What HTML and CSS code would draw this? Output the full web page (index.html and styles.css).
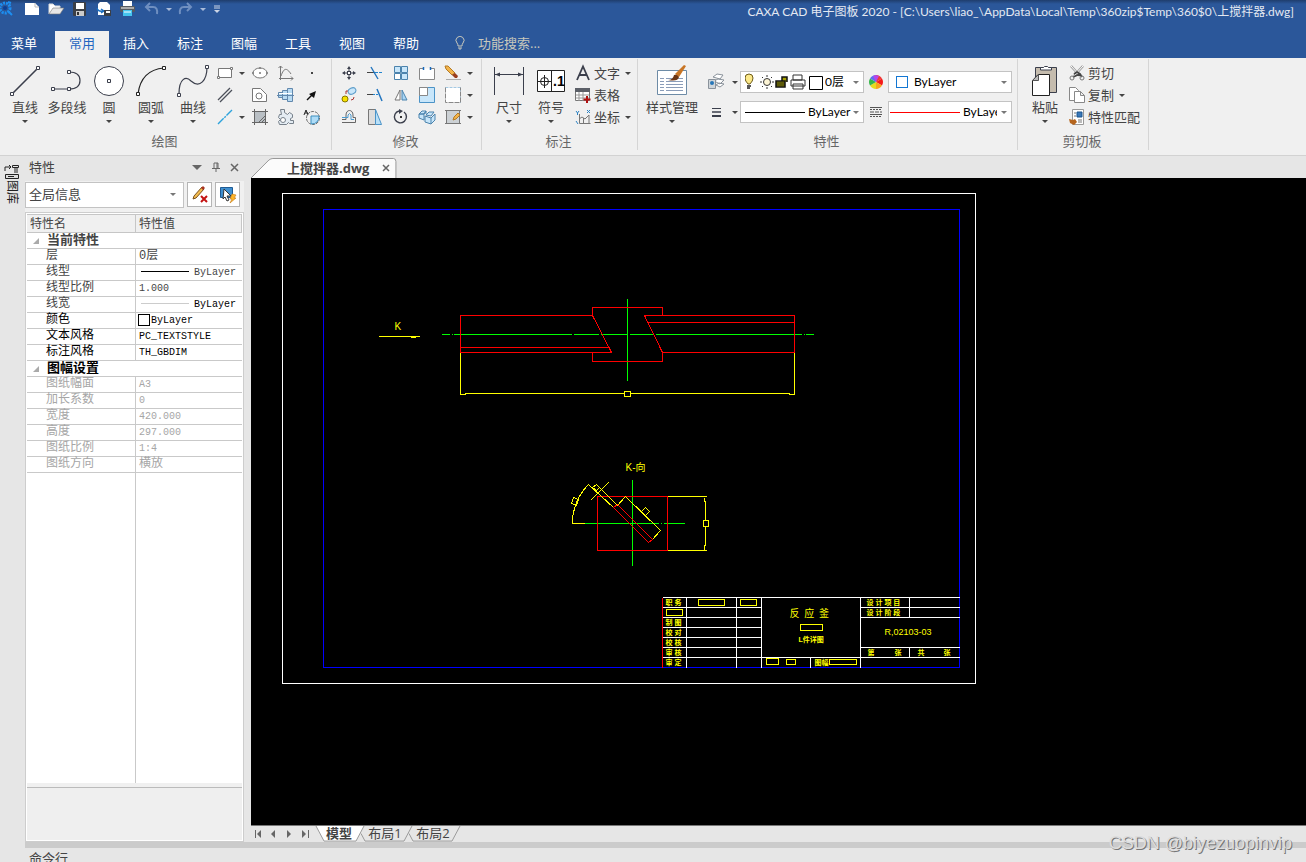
FILE: index.html
```
<!DOCTYPE html>
<html lang="zh-CN">
<head>
    <meta charset="UTF-8">
    <meta name="viewport" content="width=device-width, initial-scale=1.0">
    <title>CAXA CAD 电子图板 2020</title>
    <link rel="stylesheet" href="styles.css">
</head>
<body>
    <header class="titlebar">
        <div class="quick-access">
            <svg class="logo" width="14" height="18" viewBox="0 0 14 18"><circle cx="5" cy="8" r="5" fill="none" stroke="#1d8ef0" stroke-width="3" stroke-dasharray="2 1"/><circle cx="5" cy="8" r="2" fill="#0b3f96"/><path d="M8 11l4 4M8 2l3 1" stroke="#1d8ef0" stroke-width="2"/></svg>
            <button class="qa-btn" aria-label="新建"><svg width="18" height="18" viewBox="0 0 18 18"><path d="M2 3h10l4 4v8H2z" fill="#fff"/><path d="M12 3v4h4" fill="none" stroke="#bbb"/></svg></button>
            <button class="qa-btn" aria-label="打开"><svg width="18" height="18" viewBox="0 0 18 18"><path d="M2 14V4h4l2 2h5v2" fill="#fff" stroke="#ddd"/><path d="M2 14l4-6h11l-4 6z" fill="#e6e6e6" stroke="#777" stroke-width=".6"/></svg></button>
            <button class="qa-btn" aria-label="保存"><svg width="18" height="18" viewBox="0 0 18 18"><rect x="2" y="2" width="13" height="14" rx="1" fill="#3b3f46"/><rect x="5" y="3" width="8" height="6" fill="#fff"/><rect x="5" y="11" width="8" height="5" fill="#ccc"/><rect x="6" y="12" width="2" height="3" fill="#333"/></svg></button>
            <button class="qa-btn" aria-label="另存为"><svg width="18" height="18" viewBox="0 0 18 18"><path d="M5 2h7l3 3v10H3V4z" fill="#fff"/><path d="M2 8q1 4 6 3M6 9l3 2-3 2" fill="none" stroke="#1d6fc0" stroke-width="1.4"/><rect x="9" y="10" width="7" height="6" fill="#3b3f46"/><rect x="11" y="11" width="4" height="2" fill="#fff"/></svg></button>
            <button class="qa-btn" aria-label="打印"><svg width="18" height="18" viewBox="0 0 18 18"><rect x="4" y="1" width="9" height="5" fill="#fff"/><rect x="1" y="6" width="15" height="6" rx="1" fill="#555a60"/><rect x="2" y="7" width="13" height="2" fill="#aaa"/><path d="M4 10h9v6H4z" fill="#45c5ee"/><path d="M5 12h7" stroke="#fff"/></svg></button>
            <button class="qa-btn" aria-label="撤销"><svg width="18" height="18" viewBox="0 0 18 18" fill="none" stroke="#6f8fc0" stroke-width="2"><path d="M7 3L3 7l4 4M3 7h7q5 0 4 7"/></svg></button>
            <span class="arrow arrow-light"></span>
            <button class="qa-btn" aria-label="重做"><svg width="18" height="18" viewBox="0 0 18 18" fill="none" stroke="#6f8fc0" stroke-width="2"><path d="M10 3l4 4-4 4M14 7H7q-5 0-4 7"/></svg></button>
            <span class="arrow arrow-light"></span>
            <button class="qa-more" aria-label="自定义"><svg width="8" height="10" viewBox="0 0 8 10"><path d="M1 2h6M1 4h6" stroke="#ccd5e5"/><path d="M1 6h6L4 9z" fill="#ccd5e5"/></svg></button>
        </div>
        <div class="window-title">CAXA CAD 电子图板 2020 - [C:\Users\liao_\AppData\Local\Temp\360zip$Temp\360$0\上搅拌器.dwg]</div>
    </header>

    <nav class="menu-tabs">
        <button class="menu-tab menu-main">菜单</button>
        <button class="menu-tab active">常用</button>
        <button class="menu-tab">插入</button>
        <button class="menu-tab">标注</button>
        <button class="menu-tab">图幅</button>
        <button class="menu-tab">工具</button>
        <button class="menu-tab">视图</button>
        <button class="menu-tab">帮助</button>
        <label class="search">
            <svg width="12" height="14" viewBox="0 0 12 14" fill="none" stroke="#c8c8bc"><path d="M4 10Q4 8 3 7a4 4 0 1 1 6 0q-1 1-1 3zM4 12h4M5 13h2"/></svg>
            <input type="text" placeholder="功能搜索..." aria-label="功能搜索">
        </label>
    </nav>

    <section class="ribbon">
        <div class="group group-draw">
            <div class="group-body">
                <button class="big-btn"><svg width="34" height="34" viewBox="0 0 34 34" stroke="#3b3f4c" fill="#fff"><path d="M4 30L30 4" stroke-width="1.6"/><path d="M2.500 28.500h3v3h-3zM28.500 2.500h3v3h-3z"/></svg><span>直线</span><i class="arrow"></i></button>
                <button class="big-btn"><svg width="34" height="34" viewBox="0 0 34 34" stroke="#3b3f4c" fill="#fff"><path d="M3 25h16q11 0 11-8.500T19 8" fill="none" stroke-width="1.200"/><path d="M1.500 23.500h3v3h-3zM17.500 23.500h3v3h-3zM17.500 6.500h3v3h-3z"/></svg><span>多段线</span></button>
                <button class="big-btn"><svg width="34" height="34" viewBox="0 0 34 34" stroke="#3b3f4c" fill="#fff"><circle cx="17" cy="17" r="14.500"/><path d="M15.500 15.500h3v3h-3z"/></svg><span>圆</span><i class="arrow"></i></button>
                <button class="big-btn"><svg width="34" height="34" viewBox="0 0 34 34" stroke="#222" fill="#fff"><path d="M4 30Q7 6 30 4" fill="none" stroke-width="1.200"/><path d="M2.500 28.500h3v3h-3zM28.500 2.500h3v3h-3z"/></svg><span>圆弧</span><i class="arrow"></i></button>
                <button class="big-btn"><svg width="34" height="34" viewBox="0 0 34 34" stroke="#3b3f4c" fill="#fff"><path d="M3 30C3 14 10 12 15 17c9 8 16-1 16-14" fill="none" stroke-width="1.200"/><path d="M1.500 29.500h3v3h-3zM29.500 1.500h3v3h-3z"/></svg><span>曲线</span><i class="arrow"></i></button>
                <div class="icon-grid draw-grid">
                    <button class="tool" aria-label="矩形"><svg width="18" height="18" viewBox="0 0 18 18" fill="#fff" stroke="#777"><path d="M2.500 4.500h13v9h-13z"/><path d="M1.500 12.500h2v2h-2zM14.500 3.500h2v2h-2z"/></svg></button>
                    <i class="arrow"></i>
                    <button class="tool" aria-label="椭圆"><svg width="18" height="18" viewBox="0 0 18 18" fill="#fff" stroke="#777"><ellipse cx="9" cy="9" rx="7" ry="5"/><path d="M1.500 8.500h1v1h-1zM15.500 8.500h1v1h-1zM8.500 3.500h1v1h-1zM9 8v2M8 9h2"/></svg></button>
                    <button class="tool" aria-label="公式曲线"><svg width="18" height="18" viewBox="0 0 18 18" fill="none" stroke="#777"><path d="M3.500 2v14M2 14.500h14M1.500 4l2-2 2 2M4 12c3-9 6-8 10-2M14 12.500l2 2-2 2"/></svg></button>
                    <button class="tool" aria-label="点"><svg width="18" height="18" viewBox="0 0 18 18"><rect x="8" y="8" width="2" height="2" fill="#444"/></svg></button>
                    <button class="tool" aria-label="平行线"><svg width="18" height="18" viewBox="0 0 18 18" stroke="#4c505a" stroke-width="1.300"><path d="M2 14L14 2M4 16L16 4"/></svg></button>
                    <span></span>
                    <button class="tool" aria-label="局部放大"><svg width="18" height="18" viewBox="0 0 18 18" fill="#fff" stroke="#777"><path d="M1.500 2.500h8l6 6v7h-14z"/><circle cx="8" cy="10" r="3"/></svg></button>
                    <button class="tool" aria-label="轴"><svg width="18" height="18" viewBox="0 0 18 18" fill="#b8dbf3" stroke="#6288ad"><path d="M1.500 6.500h4v5h-4zM5.500 4.500h5v9h-5zM10.500 2.500h5v13h-5z"/><path d="M2 7.500h13" stroke="#fff"/><path d="M0 9.500h17"/></svg></button>
                    <button class="tool" aria-label="箭头"><svg width="18" height="18" viewBox="0 0 18 18"><path d="M4 14l5-5" stroke="#111" stroke-width="1.500"/><path d="M13 5l-2 7-5-4z" fill="#111"/></svg></button>
                    <button class="tool" aria-label="中心线"><svg width="18" height="18" viewBox="0 0 18 18"><path d="M2 16L16 2" stroke="#2ea3dc" stroke-width="1.400" stroke-dasharray="8 1 2 1"/></svg></button>
                    <i class="arrow"></i>
                    <button class="tool" aria-label="剖面线"><svg width="18" height="18" viewBox="0 0 18 18" stroke="#666" fill="#b9bfc4"><path d="M3.500 3.500h11v11h-11zM1 3.500h16M1 14.500h16M3.500 1v16M14.500 1v16M8 14l6-6M11 14l3-3"/></svg></button>
                    <button class="tool" aria-label="齿轮"><svg width="18" height="18" viewBox="0 0 18 18" fill="#e4ecf3" stroke="#77818b"><path d="M3.500 1.500h4v3l3 2 2-2 3 2v3l-2 1v2h3v3h-4l-1-1-2 2h-7l-1-3 2-2-2-2 1-3h2z"/><circle cx="6" cy="12" r="2.500" fill="#fff"/></svg></button>
                    <button class="tool" aria-label="文字圆"><svg width="18" height="18" viewBox="0 0 18 18" fill="none" stroke="#666"><circle cx="10" cy="10" r="6.500" stroke-dasharray="3 1"/><path d="M8 8h8q0 8-8 8z" fill="#aedcf7" stroke="#3c8fc0"/><path d="M1 7l2-5 2 5M2 5h3" stroke="#222"/></svg></button>
                </div>
            </div>
            <div class="group-name">绘图</div>
        </div>

        <div class="group group-modify">
            <div class="group-body">
                <div class="icon-grid modify-grid">
                    <button class="tool" aria-label="平移"><svg width="18" height="18" viewBox="0 0 18 18" fill="#3b3f4c"><path d="M9 2l2 3H7zM9 16l2-3H7zM2 9l3-2v4zM16 9l-3-2v4z"/><path d="M9 4v10M4 9h10" stroke="#3b3f4c"/><rect x="7.500" y="7.500" width="3" height="3" fill="#fff" stroke="#3b3f4c"/></svg></button>
                    <button class="tool" aria-label="裁剪"><svg width="18" height="18" viewBox="0 0 18 18" fill="none"><path d="M1 8.500h8" stroke="#444"/><path d="M9 8.500h8" stroke="#2385cf" stroke-dasharray="3 1"/><path d="M5 3l7 12" stroke="#2174be" stroke-width="1.400"/></svg></button>
                    <button class="tool" aria-label="阵列"><svg width="18" height="18" viewBox="0 0 18 18" fill="#c8e6fa" stroke="#4b83ad"><path d="M2.500 2.500h6v6h-6zM9.500 2.500h6v6h-6zM9.500 9.500h6v6h-6z"/><path d="M2.500 9.500h6v6h-6z" fill="#fff"/></svg></button>
                    <button class="tool" aria-label="打断"><svg width="18" height="18" viewBox="0 0 18 18" fill="#fff" stroke="#888"><path d="M6 4.500H1.500v11h15v-11H12"/><path d="M5.500 3v3M12.500 3v3" stroke="#1769bd" stroke-width="1.500"/></svg></button>
                    <button class="tool" aria-label="删除"><svg width="18" height="18" viewBox="0 0 18 18"><path d="M1 2h3l7 7-3 2-6-6z" fill="#f2b44b" stroke="#b47a24"/><path d="M8 11l3-2 3 3-1 2h-2z" fill="#9a3d1d"/><path d="M2 15.500h15" stroke="#aaa"/></svg></button>
                    <i class="arrow"></i>
                    <button class="tool" aria-label="复制"><svg width="18" height="18" viewBox="0 0 18 18" fill="none"><ellipse cx="12" cy="5" rx="4" ry="3" fill="#c8e6fa" stroke="#5b9cc9" transform="rotate(-25 12 5)"/><circle cx="5" cy="13" r="3" fill="#f7e000" stroke="#857700"/><path d="M6 8V5l2 0M11 14q3 0 3-3" stroke="#a33"/></svg></button>
                    <button class="tool" aria-label="延伸"><svg width="18" height="18" viewBox="0 0 18 18"><path d="M1 8.500h6" stroke="#444"/><path d="M7 8.500h6" stroke="#2385cf" stroke-dasharray="2 1"/><path d="M11 3l5 12" stroke="#2174be" stroke-width="1.500"/></svg></button>
                    <button class="tool" aria-label="镜像"><svg width="18" height="18" viewBox="0 0 18 18"><path d="M8 4v10H3z" fill="#fff" stroke="#777"/><path d="M10 4v10h5z" fill="#a8d5f5" stroke="#4b83ad"/></svg></button>
                    <button class="tool" aria-label="缩放"><svg width="18" height="18" viewBox="0 0 18 18" stroke="#4b93c7"><path d="M1.500 1.500h15v15h-15z" fill="#c8e6fa"/><path d="M1.500 1.500h8v8h-8z" fill="#fff" stroke="#888"/></svg></button>
                    <button class="tool" aria-label="拉伸"><svg width="18" height="18" viewBox="0 0 18 18" fill="#fff"><path d="M1.500 1.500h15v15" stroke="#4b93c7" stroke-dasharray="3 1"/><path d="M1.500 1.500v15h15v-15" stroke="#888" stroke-dasharray="5 1"/></svg></button>
                    <i class="arrow"></i>
                    <button class="tool" aria-label="等距线"><svg width="18" height="18" viewBox="0 0 18 18" fill="none"><path d="M2 11.500h4V7c0-6 7-6 7 0v2.500h2.500v5H2" stroke="#666"/><path d="M2 9.500h6V7q1.500-3 3 0v4.500h3" stroke="#4b9bd0"/></svg></button>
                    <button class="tool" aria-label="拉伸实体"><svg width="18" height="18" viewBox="0 0 18 18"><path d="M2.500 1.500h7v15h-7z" fill="#ddd" stroke="#777"/><path d="M9.500 1.500l6 15h-6z" fill="#b9e0f8" stroke="#4b93c7"/></svg></button>
                    <button class="tool" aria-label="旋转"><svg width="18" height="18" viewBox="0 0 18 18"><path d="M12 4A6 6 0 1 1 7 3" fill="none" stroke="#3b3f4c" stroke-width="1.400"/><path d="M7 1l4 2-4 3z" fill="#3b3f4c"/><rect x="8" y="8" width="2" height="2" fill="#333"/></svg></button>
                    <button class="tool" aria-label="分解"><svg width="18" height="18" viewBox="0 0 18 18" fill="#c8e6fa" stroke="#4b83ad"><path d="M1 6l3-3h4L6 6zM1 6h5v6l-5-2zM6 6l2-3v3M8 7l3-3h5l-3 4zM7 8l6 2v6l-6-2zM13 10l4-4v6l-4 4"/></svg></button>
                    <button class="tool" aria-label="填充编辑"><svg width="18" height="18" viewBox="0 0 18 18" stroke="#777" fill="#ccd1d5"><path d="M2.500 2.500h13v13h-13zM1 2.500h16M1 15.500h16"/><path d="M9 12l1-3 4-4 2 2-4 4z" fill="#f2b44b" stroke="#b47a24"/></svg></button>
                    <i class="arrow"></i>
                </div>
            </div>
            <div class="group-name">修改</div>
        </div>

        <div class="group group-note">
            <div class="group-body">
                <button class="big-btn"><svg width="34" height="34" viewBox="0 0 34 34"><path d="M2.500 3v28M31.500 3v28M3 10.500h28" stroke="#3b3f4c"/><path d="M3 10.500l5-2v4zM31 10.500l-5-2v4z" fill="#3b3f4c"/></svg><span>尺寸</span><i class="arrow"></i></button>
                <button class="big-btn"><svg width="34" height="34" viewBox="0 0 34 34"><path d="M3.500 6.500h27v21h-27zM17.500 6.500v21" fill="#fff" stroke="#222"/><circle cx="10.500" cy="17.500" r="4" fill="none" stroke="#222"/><path d="M4 17.500h13M10.500 11v13" stroke="#222"/><text class="tolerance" x="19" y="22">.1</text></svg><span>符号</span><i class="arrow"></i></button>
                <div class="row-list">
                    <button class="row-btn"><svg width="18" height="18" viewBox="0 0 18 18"><path d="M3 16L9 2.500 15 16M5 11h8" fill="none" stroke="#3b3f4c" stroke-width="1.800"/></svg>文字<i class="arrow"></i></button>
                    <button class="row-btn"><svg width="18" height="18" viewBox="0 0 18 18"><path d="M1.500 2.500h14v12h-14z" fill="#fff" stroke="#777"/><path d="M1 2h15v4H1z" fill="#5c6068"/><path d="M2 9h13M2 12h13M5 6v9M9 6v9" stroke="#999"/><path d="M13 10v7M9.500 13.500h7" stroke="#b01010" stroke-width="2"/></svg>表格</button>
                    <button class="row-btn"><svg width="18" height="18" viewBox="0 0 18 18" fill="none"><path d="M5.500 6v9.500h11M5 11l3-2 3 2 4-4v8M9.500 10v5" stroke="#777"/><path d="M2 3l1.500 2L5 3M3.500 5v2M13 2l3 3M16 2l-3 3M2 13l2 3" stroke="#2d83c4"/></svg>坐标<i class="arrow"></i></button>
                </div>
            </div>
            <div class="group-name">标注</div>
        </div>

        <div class="group group-props">
            <div class="group-body">
                <button class="big-btn style-btn"><svg width="34" height="34" viewBox="0 0 34 34"><path d="M2.500 6.500h29v24h-29z" fill="#fff" stroke="#6d8ba6"/><path d="M5 14.500h4M5 17.500h4M5 20.500h4M5 23.500h4M5 26.500h4M11 14.500h17M11 17.500h17M11 20.500h17M11 23.500h17M11 26.500h17" stroke="#8a9cb8"/><path d="M20 10L29 1l2 1-7 11z" fill="#c87524"/><path d="M13 16q5 0 6-5 3-1 5 2-1 5-11 3z" fill="#6b3513"/></svg><span>样式管理</span><i class="arrow"></i></button>
                <div class="combo-grid">
                    <button class="tool" aria-label="图层"><svg width="18" height="18" viewBox="0 0 18 18" fill="#fff" stroke="#8a929b"><path d="M6 4l4-3 6 1-3 4zM7 8l4-2 6 1-4 4zM9 12l3-2 5 1-4 3z"/><path d="M1.500 6.500h7v9h-7z" fill="#cfd5da"/><circle cx="5" cy="10" r="2" fill="#2776b8" stroke="none"/></svg></button>
                    <i class="arrow"></i>
                    <label class="combo">
                        <svg width="80" height="18" viewBox="0 0 80 18"><path d="M3 11q-3-3-3-6 0-4 4-4t4 4q0 3-3 6z" fill="#fce98a" stroke="#6d5b18"/><path d="M2 13h4M2 15h3" stroke="#222" stroke-width="1.500"/><g stroke="#333"><circle cx="22" cy="9" r="3.500" fill="#fdf5d5"/><path d="M22 2v2M22 14v2M15 9h2M27 9h2M17 4l1 1M26 13l1 1M27 4l-1 1M18 13l-1 1"/></g><path d="M31 8h9v6h-9zM37 8V4h5v5" fill="#a9a300" stroke="#111" stroke-width="1.500"/><path d="M31 10h9M31 12h9" stroke="#111"/><path d="M48 2h9v5h-9zM46 7h14v6H46zM48 11h10v5H48z" fill="#fff" stroke="#333"/><path d="M64.500 3.500h13v13h-13z" fill="#fff" stroke="#000"/></svg>
                        <select aria-label="图层选择"><option>0层</option></select>
                        <i class="arrow arrow-grey"></i>
                    </label>
                    <button class="tool" aria-label="颜色"><svg width="16" height="16" viewBox="0 0 16 16"><path d="M8 8V1a7 7 0 0 1 6 3.500z" fill="#f03838"/><path d="M8 8l6-3.500a7 7 0 0 1 0 7z" fill="#f51a1a"/><path d="M8 8l6 3.500A7 7 0 0 1 8 15z" fill="#f7a51b"/><path d="M8 8v7a7 7 0 0 1-6-3.500z" fill="#e5dc20"/><path d="M8 8l-6 3.500a7 7 0 0 1 0-7z" fill="#35b64a"/><path d="M8 8L2 4.500A7 7 0 0 1 8 1z" fill="#5c6ff0"/><path d="M8 8L5 2a7 7 0 0 1 6 0z" fill="#b744e8"/></svg></button>
                    <label class="combo">
                        <span class="color-box"></span>
                        <select aria-label="颜色选择"><option>ByLayer</option></select>
                        <i class="arrow arrow-grey"></i>
                    </label>

                    <button class="tool" aria-label="线宽"><svg width="18" height="18" viewBox="0 0 18 18" stroke="#3b3f4c"><path d="M5 5.500h9"/><path d="M5 9h9" stroke-width="1.500"/><path d="M5 13h9" stroke-width="2"/></svg></button>
                    <i class="arrow"></i>
                    <label class="combo">
                        <span class="line-sample line-black"></span>
                        <select aria-label="线宽选择"><option>ByLayer</option></select>
                        <i class="arrow arrow-grey"></i>
                    </label>
                    <button class="tool" aria-label="线型"><svg width="14" height="18" viewBox="0 0 14 18" stroke="#555"><path d="M1 4.500h12M1 11.500h12"/><path d="M1 6.500h12M1 13.500h12" stroke-dasharray="2 1"/><path d="M1 9h12" stroke-dasharray="4 1"/></svg></button>
                    <label class="combo combo-linetype">
                        <span class="line-sample line-red"></span>
                        <select aria-label="线型选择"><option>ByLayer</option></select>
                        <i class="arrow arrow-grey"></i>
                    </label>
                </div>
            </div>
            <div class="group-name">特性</div>
        </div>

        <div class="group group-clip">
            <div class="group-body">
                <button class="big-btn"><svg width="34" height="34" viewBox="0 0 34 34"><path d="M7.500 3.500h21v25h-21z" fill="#c5bcae" stroke="#3b3f4c"/><path d="M12.500 6V3.500h3l1-1h3l1 1h3V6z" fill="#fff" stroke="#3b3f4c"/><path d="M10 10.500h11.500v21h-17v-15z" fill="#fff" stroke="#222"/><path d="M4.500 16.500h6v-6z" fill="#bbb" stroke="#555"/></svg><span>粘贴</span><i class="arrow"></i></button>
                <div class="row-list">
                    <button class="row-btn"><svg width="18" height="18" viewBox="0 0 18 18" fill="none"><path d="M3 2l9 10M15 2L6 12" stroke="#999" stroke-width="2.500"/><path d="M3 2l9 10M15 2L6 12" stroke="#fff"/><path d="M6 10l3-2 3 2 2 3M12 10l-7 3" stroke="#444" stroke-width="1.800"/><circle cx="4" cy="14" r="2" stroke="#777"/><circle cx="14" cy="14" r="2" stroke="#777"/></svg>剪切</button>
                    <button class="row-btn"><svg width="18" height="18" viewBox="0 0 18 18" fill="#fff" stroke="#888"><path d="M1.500 1.500h6l3 3v10h-9z"/><path d="M6.500 5.500h6l4 4v7h-10zM12.500 5.500v4h4"/></svg>复制<i class="arrow"></i></button>
                    <button class="row-btn"><svg width="18" height="18" viewBox="0 0 18 18"><path d="M4.500 1.500h11v15h-11z" fill="#fff" stroke="#999"/><path d="M9 4h5v5H9z" fill="#3978ba" stroke="#1c548c"/><path d="M6 5h2M6 8h2M10 12h4M10 14h4" stroke="#777"/><path d="M1 11l4 1 2-1 2 3-3 3-4-2z" fill="#b5651d"/></svg>特性匹配</button>
                </div>
            </div>
            <div class="group-name">剪切板</div>
        </div>
    </section>

    <main class="workspace">
        <aside class="side-strip">
            <button class="side-tab"><svg width="16" height="16" viewBox="0 0 16 16" fill="none" stroke="#222"><path d="M1 8V4h6M5 2l2 2-2 2M8.500 2.500h6v2h-6zM11 5v5M13 5v5"/><path d="M1.500 11.500h13v4h-13z" fill="#ddd"/><path d="M4 13.500h6"/></svg><span>图库</span></button>
        </aside>

        <section class="panel">
            <div class="panel-head">
                <h2>特性</h2>
                <button class="panel-ctl" aria-label="菜单"><svg width="10" height="10" viewBox="0 0 10 10"><path d="M0 3h10L5 8z" fill="#666"/></svg></button>
                <button class="panel-ctl" aria-label="固定"><svg width="10" height="10" viewBox="0 0 10 10" fill="none" stroke="#666"><path d="M3 6V1h4v5M6 1v5M1 6.500h8M5 7v3"/></svg></button>
                <button class="panel-ctl" aria-label="关闭"><svg width="10" height="10" viewBox="0 0 10 10"><path d="M1 2l7 7M8 2L1 9" stroke="#666" stroke-width="1.500"/></svg></button>
            </div>
            <div class="panel-filter">
                <label class="combo filter-combo">
                    <select aria-label="选择范围"><option>全局信息</option></select>
                    <i class="arrow arrow-grey"></i>
                </label>
                <button class="filter-btn" aria-label="清除选择"><svg width="18" height="18" viewBox="0 0 18 18"><path d="M2 13l1-3 8-9 2 2-8 9z" fill="#f4bd50" stroke="#79501c"/><path d="M10 2l2-2 2 2-2 2z" fill="#a83220"/><path d="M10 10l6 6M16 10l-6 6" stroke="#c41212" stroke-width="2"/></svg></button>
                <button class="filter-btn" aria-label="快速选择"><svg width="18" height="18" viewBox="0 0 18 18"><path d="M1.500 1.500h12v10h-12z" fill="#3f8fd0" stroke="#1f5b94"/><path d="M5 3l7 7h-4l2 4-2 1-2-4-2 2z" fill="#fff" stroke="#333"/><path d="M13 8l4 1-2 3h2l-6 5 2-4h-2z" fill="#ffb628" stroke="#c47912" stroke-width=".6"/></svg></button>
            </div>
            <div class="prop-box">
                <table class="props">
                    <colgroup><col class="col-name"><col></colgroup>
                    <thead>
                        <tr><th>特性名</th><th>特性值</th></tr>
                    </thead>
                    <tbody>
                        <tr class="section"><td colspan="2"><svg width="6" height="6" viewBox="0 0 6 6"><path d="M6 0v6H0z" fill="#aaa"/></svg>当前特性</td></tr>
                        <tr><td>层</td><td class="cjk">0层</td></tr>
                        <tr><td>线型</td><td><span class="cell-line"></span>ByLayer</td></tr>
                        <tr><td>线型比例</td><td>1.000</td></tr>
                        <tr><td>线宽</td><td class="dark"><span class="cell-line thin"></span>ByLayer</td></tr>
                        <tr class="dark"><td>颜色</td><td class="color-cell"><span class="cell-color"></span>ByLayer</td></tr>
                        <tr class="dark"><td>文本风格</td><td>PC_TEXTSTYLE</td></tr>
                        <tr class="dark"><td>标注风格</td><td>TH_GBDIM</td></tr>
                        <tr class="section dark"><td colspan="2"><svg width="6" height="6" viewBox="0 0 6 6"><path d="M6 0v6H0z" fill="#aaa"/></svg>图幅设置</td></tr>
                        <tr class="off"><td>图纸幅面</td><td>A3</td></tr>
                        <tr class="off"><td>加长系数</td><td>0</td></tr>
                        <tr class="off"><td>宽度</td><td>420.000</td></tr>
                        <tr class="off"><td>高度</td><td>297.000</td></tr>
                        <tr class="off"><td>图纸比例</td><td>1:4</td></tr>
                        <tr class="off"><td>图纸方向</td><td class="cjk">横放</td></tr>
                    </tbody>
                </table>
                <div class="prop-rest"></div>
                <div class="prop-desc"></div>
            </div>
        </section>

        <section class="document">
            <div class="doc-tabs">
                <div class="doc-tab">
                    <svg class="tab-shape" viewBox="0 0 146 20" preserveAspectRatio="none"><path d="M0 20L18 2q2-1.500 4-1.500h121q2.500 0 2.500 3V20" fill="#fbfbfb" stroke="#999"/></svg>
                    <span>上搅拌器.dwg</span>
                    <button class="doc-close" aria-label="关闭"><svg width="8" height="8" viewBox="0 0 8 8"><path d="M1 1l6 6M7 1L1 7" stroke="#666" stroke-width="1.500"/></svg></button>
                </div>
            </div>

            <div class="canvas">
                <svg class="drawing" width="100%" height="100%">
                    <g transform="translate(-250.500 -177.500)" fill="none" shape-rendering="crispEdges">
                        <!-- sheet frame -->
                        <path class="white" d="M282 193h693v490H282z"/>
                        <path class="frame" d="M323 209h636v458H323z"/>

                        <!-- front view -->
                        <path class="green" d="M441 334h8M451 334h1M453 334h118M573 334h25M600 334h1M602 334h24M629 334h24M655 334h146M803 334h1M805 334h8M627 298v82"/>
                        <path class="red" d="M592 315H460v37h151L592 315v-8h70v8M609 347H460M643 315h151v37H662L644 315M647 322h147M592 352v9h70v-9"/>
                        <path class="yellow" d="M460 352v42h5v-1h324v1h5v-42"/>
                        <path class="yellow on-black" d="M624 391h6v5h-6z"/>
                        <path class="yellow" d="M378 336h41M410 337h5"/>
                        <text class="cad-text label" x="394" y="329">K</text>

                        <!-- K direction view -->
                        <path class="green" d="M632 479v86M584 523h74M660 523h1M663 523h21"/>
                        <path class="red" d="M597 496h70v54h-70zM613 507l35 35 4-3-35-35z"/>
                        <path class="yellow" d="M584 523h-12q0-23 16-39M588 484l25 23M600 488l17 17 8-9 35 34-8 9M590 500l18-18"/>
                        <path class="yellow" d="M573 497l5 2-2 6-5-2zM592 487l4-3 3 3-3 3zM641 511l4-4 4 4-4 4z"/>
                        <path class="yellow" d="M667 496h39M667 550h39M704 497v4h1v44h-1v5"/>
                        <path class="yellow on-black" d="M703 520h5v6h-5z"/>
                        <text class="cad-text label" x="625" y="470">K-向</text>

                        <!-- title block -->
                        <path class="white" d="M662 597h297M662 607h99M860 607h99M662 617h99M860 617h99M662 627h99M662 637h99M662 647h99M860 647h99M662 657h297M686 597v70M736 597v70M761 597v70M860 597v70M909 597v20M909 647v10M810 657v10"/>
                        <path class="red" d="M662 597v70"/>
                        <path class="yellow" d="M698 599h26v6h-26zM740 599h16v6h-16zM666 609h16v6h-16zM800 624h22v6h-22zM766 658h12v6h-12zM786 659h9v5h-9zM829 659h27v5h-27z"/>
                        <g class="cad-text tiny">
                            <text x="665" y="604">职 务</text>
                            <text x="665" y="624">制 图</text>
                            <text x="665" y="634">校 对</text>
                            <text x="665" y="644">校 核</text>
                            <text x="665" y="654">审 核</text>
                            <text x="665" y="664">审 定</text>
                            <text x="866" y="604">设 计 项 目</text>
                            <text x="866" y="614">设 计 阶 段</text>
                            <text x="867" y="654">第</text>
                            <text x="894" y="654">张</text>
                            <text x="917" y="654">共</text>
                            <text x="943" y="654">张</text>
                            <text x="814" y="664">图幅</text>
                            <text x="798" y="641">L件详图</text>
                        </g>
                        <text class="cad-text part" x="789" y="616">反 应 釜</text>
                        <text class="cad-text number" x="884" y="634">R,02103-03</text>
                    </g>
                </svg>
            </div>

            <div class="sheet-tabs">
                <button class="nav-btn" aria-label="第一个"><svg width="8" height="8" viewBox="0 0 8 8"><path d="M1.500 0v8" stroke="#666"/><path d="M7 0v8L3 4z" fill="#666"/></svg></button>
                <button class="nav-btn" aria-label="上一个"><svg width="8" height="8" viewBox="0 0 8 8"><path d="M6 0v8L2 4z" fill="#666"/></svg></button>
                <button class="nav-btn" aria-label="下一个"><svg width="8" height="8" viewBox="0 0 8 8"><path d="M2 0v8l4-4z" fill="#666"/></svg></button>
                <button class="nav-btn" aria-label="最后一个"><svg width="8" height="8" viewBox="0 0 8 8"><path d="M7.500 0v8" stroke="#666"/><path d="M1 0v8l4-4z" fill="#666"/></svg></button>
                <button class="sheet-tab current"><svg class="tab-shape" viewBox="0 0 48 17" preserveAspectRatio="none"><path d="M0 0l8 16h32l8-16" fill="#fff" stroke="#999"/></svg><span>模型</span></button>
                <button class="sheet-tab"><svg class="tab-shape" viewBox="0 0 48 17" preserveAspectRatio="none"><path d="M-3 8l4 8h39l8-16" fill="none" stroke="#999"/></svg><span>布局1</span></button>
                <button class="sheet-tab"><svg class="tab-shape" viewBox="0 0 48 17" preserveAspectRatio="none"><path d="M-3 8l4 8h39l8-16" fill="none" stroke="#999"/></svg><span>布局2</span></button>
            </div>
        </section>
    </main>

    <footer class="command-bar">命令行</footer>
    <div class="watermark">CSDN @biyezuopinvip</div>
</body>
</html>
```

FILE: styles.css
```
* {
    margin: 0;
    padding: 0;
    box-sizing: border-box;
}

body {
    display: flex;
    flex-direction: column;
    height: 100vh;
    overflow: hidden;
    position: relative;
    background: #e6e6e6;
    color: #444;
    font-family: "Open Sans", "Noto Sans CJK SC", sans-serif;
    font-size: 13px;
    line-height: 18px;
}

button,
select,
input {
    font: inherit;
    color: inherit;
    background: none;
    border: none;
}

button {
    display: flex;
    align-items: center;
    justify-content: center;
    white-space: nowrap;
}

svg {
    display: block;
    flex: none;
}

.arrow {
    width: 0;
    height: 0;
    border: 3px solid transparent;
    border-top-color: #444;
    border-bottom: none;
    flex: none;
    align-self: center;
    justify-self: center;
}

.arrow-light {
    border-top-color: #a9bbd9;
}

.arrow-grey {
    border-top-color: #777;
}

/* Title bar */
.titlebar {
    display: flex;
    justify-content: space-between;
    height: 31px;
    padding-right: 12px;
    background: linear-gradient(#1f3d6d, #2b579a 4px);
}

.quick-access {
    display: flex;
    align-items: center;
    height: 18px;
}

.logo {
    margin-right: 6px;
}

.qa-btn {
    width: 24px;
}

.quick-access .arrow {
    margin: 0 2px;
}

.qa-more {
    margin-left: 5px;
}

.window-title {
    color: #e4e9f2;
    font-family: Lato, "Noto Sans CJK SC", sans-serif;
    font-size: 12px;
    line-height: 24px;
    white-space: nowrap;
}

/* Menu */
.menu-tabs {
    display: flex;
    height: 27px;
    background: #2b579a;
}

.menu-tab {
    width: 54px;
    padding-bottom: 4px;
    color: #fff;
}

.menu-main {
    width: 48px;
    margin-right: 7px;
}

.menu-tab.active {
    background: #f0f0f0;
    color: #1f66c1;
}

.search {
    display: flex;
    align-items: center;
    gap: 12px;
    margin-left: 21px;
    padding-bottom: 4px;
    color: #c8c8bc;
}

.search input {
    width: 120px;
}

.search input::placeholder {
    color: #c8c8bc;
    opacity: 1;
}

/* Ribbon */
.ribbon {
    display: flex;
    padding: 1px 0 5px;
    background: #f0f0f0;
    border-bottom: 1px solid #d2d2d2;
}

.group {
    border-right: 1px solid #d5d5d5;
}

.group-body {
    display: flex;
    height: 73px;
    padding: 3px 0 0 6px;
}

.group-name {
    padding-right: 2px;
    color: #666;
    text-align: center;
}

.group-draw {
    width: 332px;
}

.group-modify {
    width: 150px;
}

.group-note {
    width: 156px;
}

.group-props {
    width: 380px;
}

.group-clip {
    width: 131px;
}

.group-draw .group-body,
.group-modify .group-body {
    padding-left: 4px;
}

.big-btn {
    flex-direction: column;
    justify-content: flex-start;
    width: 42px;
    padding-top: 2px;
}

.big-btn .arrow {
    margin-top: 4px;
}

.icon-grid {
    display: grid;
    grid-auto-rows: 22px;
}

.draw-grid {
    grid-template-columns: 18px 16px 20px 32px 20px;
    margin-left: 2px;
}

.modify-grid {
    grid-template-columns: repeat(5, 26px) 8px;
}

.row-list {
    display: flex;
    flex-direction: column;
    margin-left: 2px;
}

.row-btn {
    justify-content: flex-start;
    height: 22px;
    gap: 2px;
}

.row-btn .arrow {
    margin-left: 3px;
}

.tolerance {
    font: bold 14px "Liberation Sans", sans-serif;
}

.style-btn {
    width: 56px;
}

.combo-grid {
    display: grid;
    grid-template-columns: 32px 8px 124px 24px 124px;
    grid-auto-rows: 22px;
    gap: 8px 0;
    padding-top: 9px;
}

.combo-grid > .arrow {
    justify-self: start;
}

.combo {
    display: flex;
    align-items: center;
    min-width: 0;
    padding: 0 4px;
    background: #fff;
    border: 1px solid #c3c3c3;
    color: #000;
    font-family: Lato, "Noto Sans CJK SC", sans-serif;
    font-size: 12px;
    overflow: hidden;
}

.combo select {
    appearance: none;
    flex: 1;
    min-width: 0;
    outline: none;
}

.color-box {
    width: 12px;
    height: 12px;
    margin: 0 6px 0 3px;
    border: 1px solid #1377d3;
}

.line-sample {
    width: 60px;
    height: 1px;
    margin-right: 3px;
    flex: none;
}

.line-black {
    background: #000;
}

.line-red {
    width: 70px;
    background: #f00;
}

.combo-linetype {
    padding-left: 1px;
}

.combo-linetype .arrow {
    margin-left: 4px;
}

/* Workspace */
.workspace {
    display: flex;
    flex: 1;
    min-height: 0;
}

.side-strip {
    width: 25px;
    padding: 7px 4px;
}

.side-tab {
    flex-direction: column;
    gap: 1px;
    font-size: 12px;
    line-height: 16px;
    color: #222;
}

.side-tab span {
    writing-mode: vertical-rl;
    text-orientation: sideways;
}

.panel {
    display: flex;
    flex-direction: column;
    width: 219px;
    margin-right: 7px;
    background: #f0f0f0;
}

.panel-head {
    display: flex;
    align-items: center;
    gap: 9px;
    height: 25px;
    padding: 0 4px 3px;
    background: #e6e6e6;
}

.panel-head h2 {
    flex: 1;
    font-size: 13px;
    font-weight: normal;
}

.panel-filter {
    display: flex;
    gap: 3px;
    padding: 1px 4px 4px 0;
}

.filter-combo {
    flex: 1;
    height: 26px;
    padding: 0 7px 2px 3px;
    color: #444;
    font-size: 13px;
}

.filter-btn {
    width: 25px;
    height: 25px;
    background: #fff;
    border: 1px solid #b5b5b5;
}

.prop-box {
    display: flex;
    flex-direction: column;
    flex: 1;
    padding: 1px;
    background: #fff;
    border: 1px solid #cdcdcd;
}

.props {
    width: 100%;
    table-layout: fixed;
    border-spacing: 0;
    font-size: 12px;
    line-height: 15px;
}

.col-name {
    width: 109px;
}

.props th {
    height: 19px;
    padding-left: 3px;
    background: #f0f0f0;
    border: 1px solid #c6c6c6;
    border-width: 1px 1px 1px 0;
    font-weight: normal;
    text-align: left;
}

.props td {
    height: 16px;
    padding-left: 3px;
    border-bottom: 1px solid #c9c9c9;
    font-family: "Liberation Mono", "Noto Sans CJK SC", monospace;
    font-size: 10px;
    white-space: nowrap;
}

.props td:first-child {
    padding-left: 19px;
    border-right: 1px solid #c9c9c9;
    font-size: 12px;
}

.props td.cjk {
    font-size: 12px;
}

.props .section td {
    padding-left: 6px;
    border-right: none;
    font-size: 13px;
    font-weight: bold;
}

.section svg {
    display: inline-block;
    margin-right: 8px;
}

.props .dark {
    color: #000;
}

.props .off {
    color: #a6a6a6;
}

.cell-line {
    display: inline-block;
    width: 48px;
    height: 1px;
    margin: 0 5px 3px 2px;
    background: #000;
}

.cell-line.thin {
    background: #ccc;
}

.props .color-cell {
    padding-left: 2px;
}

.cell-color {
    display: inline-block;
    width: 12px;
    height: 12px;
    margin-right: 1px;
    border: 1px solid #000;
    vertical-align: middle;
}

.prop-rest {
    flex: 1;
    width: 109px;
    border-right: 1px solid #c9c9c9;
}

.prop-desc {
    height: 53px;
    background: #efefef;
    border-top: 1px solid #bbb;
    box-shadow: 0 -4px #f0f0f0;
}

/* Drawing document */
.document {
    display: flex;
    flex-direction: column;
    flex: 1;
    min-width: 0;
}

.doc-tabs {
    display: flex;
    align-items: flex-end;
    height: 22px;
}

.doc-tab {
    display: flex;
    align-items: center;
    position: relative;
    height: 20px;
    padding: 0 6px 0 36px;
    font-weight: bold;
}

.doc-tab span,
.doc-close {
    position: relative;
}

.doc-close {
    margin-left: 13px;
}

.tab-shape {
    position: absolute;
    inset: 0;
    width: 100%;
    height: 100%;
    overflow: visible;
}

.canvas {
    flex: 1;
    min-height: 0;
    background: #000;
}

.white { stroke: #fff; }
.frame { stroke: #00f; }
.red { stroke: #f00; }
.green { stroke: #0f0; }
.yellow { stroke: #ff0; }
.on-black { fill: #000; }

.cad-text {
    fill: #ff0;
    font-family: "Liberation Sans", "Noto Sans CJK SC", sans-serif;
}

.label { font-size: 10px; }
.part { font-size: 10px; word-spacing: 2px; }
.number { font-size: 9px; }
.tiny { font-size: 7px; font-weight: bold; }

.sheet-tabs {
    display: flex;
    height: 17px;
    border-top: 1px solid #777;
}

.nav-btn {
    width: 16px;
}

.nav-btn:first-child {
    width: 14px;
}

.sheet-tab {
    position: relative;
    width: 48px;
    padding-right: 6px;
    line-height: 16px;
}

.sheet-tab span {
    position: relative;
    margin-top: -2px;
}

.sheet-tab.current {
    margin-left: 3px;
    padding: 0 2px 0 0;
    font-weight: bold;
}

.command-bar {
    height: 20px;
    margin-left: 25px;
    padding-left: 4px;
    border-top: 6px solid #cbcbcb;
    line-height: 20px;
    overflow: hidden;
}

.watermark {
    position: absolute;
    right: 14px;
    bottom: 9px;
    color: #ddd;
    font: 18px/20px "Liberation Sans", Arial, sans-serif;
    text-shadow: 1px 1px #777;
}
```
